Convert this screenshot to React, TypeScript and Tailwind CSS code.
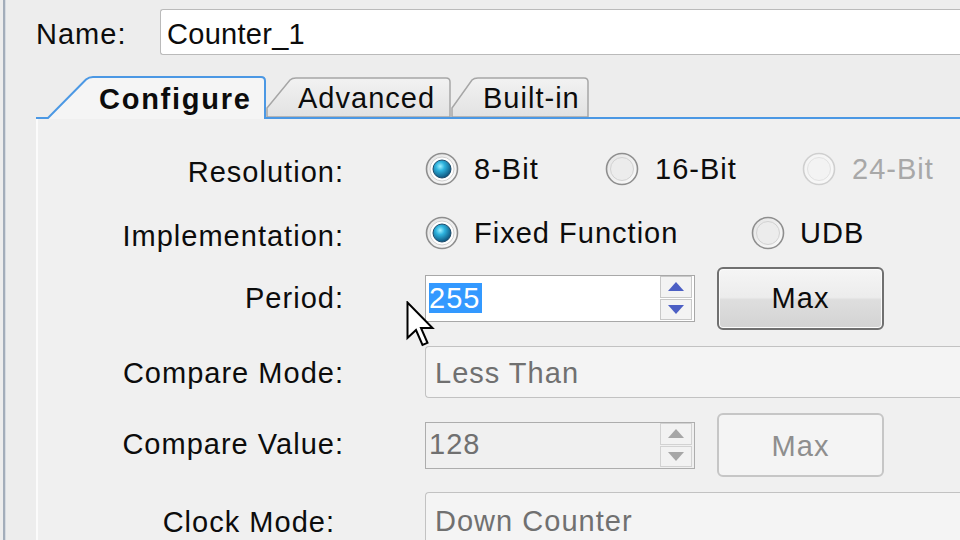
import React from "react";

type RadioState = "on" | "off" | "disabled";

function Radio({ state }: { state: RadioState }) {
  const ring = state === "disabled" ? "#cfcfcf" : "#8e8e8e";
  return (
    <svg width="34" height="34" viewBox="0 0 34 34" className="shrink-0">
      <defs>
        <linearGradient id={`rg-${state}`} x1="0" y1="0" x2="1" y2="1">
          <stop offset="0" stopColor={state === "disabled" ? "#f4f4f4" : "#e4e4e4"} />
          <stop offset="1" stopColor={state === "disabled" ? "#f8f8f8" : "#fbfbfb"} />
        </linearGradient>
        <radialGradient id="dot" cx="0.4" cy="0.35" r="0.7">
          <stop offset="0" stopColor="#9ff0ff" />
          <stop offset="0.35" stopColor="#2eb3de" />
          <stop offset="1" stopColor="#0b4a73" />
        </radialGradient>
      </defs>
      <circle cx="17" cy="17" r="15.5" fill={`url(#rg-${state})`} stroke={ring} strokeWidth="1.6" />
      {state === "on" ? (
        <>
          <circle cx="17" cy="17" r="12" fill="#ffffff" stroke="#d0d0d0" strokeWidth="1" />
          <circle cx="17" cy="17" r="9" fill="url(#dot)" stroke="#1d4c6b" strokeWidth="1" />
        </>
      ) : (
        <circle
          cx="17"
          cy="17"
          r="11.5"
          fill={state === "disabled" ? "#f3f3f3" : "#ececec"}
          stroke={state === "disabled" ? "#e2e2e2" : "#d2d2d2"}
          strokeWidth="1"
        />
      )}
    </svg>
  );
}

function Spinner({ disabled }: { disabled?: boolean }) {
  const fill = disabled ? "#a6a6a6" : "#4c5fc4";
  const box = disabled
    ? "flex-1 flex items-center justify-center border border-[#d2d2d2] bg-[#f2f2f2]"
    : "flex-1 flex items-center justify-center border border-[#c8c8c8] bg-[#f3f3f3]";
  return (
    <div className="w-[32px] h-[44px] flex flex-col gap-[1px] shrink-0">
      <div className={box}>
        <svg width="16" height="9" viewBox="0 0 16 9">
          <polygon points="8,0 16,9 0,9" fill={fill} />
        </svg>
      </div>
      <div className={box}>
        <svg width="16" height="9" viewBox="0 0 16 9">
          <polygon points="0,0 16,0 8,9" fill={fill} />
        </svg>
      </div>
    </div>
  );
}

export default function App() {
  return (
    <div className="relative flex w-[960px] h-[540px] overflow-hidden bg-[#ededed] font-['Liberation_Sans',Arial,sans-serif] text-[29px] tracking-[0.035em] text-[#0c0c0c]">
      <div className="w-[3px] shrink-0" />
      <div className="w-[3px] shrink-0 bg-[#a3adba] border-r border-[#d6dbe1]" />
      <div className="flex-1 flex flex-col pl-[30px]">
        {/* name */}
        <div className="flex items-center h-[46px] mt-[9px]">
          <span className="w-[124px] pt-[5px]">Name:</span>
          <div className="flex-1 h-full flex items-center pl-[6px] pt-[5px] bg-white border border-r-0 border-[#bababa] rounded-l-[3px] tracking-[0.01em]">
            Counter_1
          </div>
        </div>

        {/* tabs */}
        <div className="flex items-end h-[43px] mt-[21px]">
          <div className="relative w-[230px] h-[43px] shrink-0">
            <svg className="absolute inset-0" width="230" height="43" viewBox="0 0 230 43">
              <path d="M0 42 L12 42 L50 3.5 Q53 1 57 1 L225 1 Q229 1 229 5 L229 43 L0 43 Z" fill="#f5f5f5" />
              <path d="M0 42 L12 42 L50 3.5 Q53 1 57 1 L225 1 Q229 1 229 5 L229 43" fill="none" stroke="#4b98e4" strokeWidth="2" />
            </svg>
            <div className="relative h-full flex items-center pl-[63px] pt-[4px] font-bold tracking-[0.06em]">Configure</div>
          </div>
          <div className="relative w-[185px] h-[42px] shrink-0">
            <svg className="absolute inset-0" width="185" height="42" viewBox="0 0 185 42">
              <defs>
                <linearGradient id="tabg" x1="0" y1="0" x2="0" y2="1">
                  <stop offset="0" stopColor="#f2f2f2" />
                  <stop offset="1" stopColor="#e2e2e2" />
                </linearGradient>
              </defs>
              <path d="M1 40 L1 31 L24 3 Q26 1 30 1 L180 1 Q184 1 184 5 L184 40 Z" fill="url(#tabg)" stroke="#a6a6a6" strokeWidth="1.5" />
              <line x1="0" y1="41" x2="185" y2="41" stroke="#4b98e4" strokeWidth="2" />
            </svg>
            <div className="relative h-full flex items-center pl-[32px] pt-[2px]">Advanced</div>
          </div>
          <div className="relative w-[138px] h-[42px] shrink-0">
            <svg className="absolute inset-0" width="138" height="42" viewBox="0 0 138 42">
              <path d="M1 40 L1 31 L21 3 Q23 1 27 1 L133 1 Q137 1 137 5 L137 40 Z" fill="url(#tabg)" stroke="#a6a6a6" strokeWidth="1.5" />
              <line x1="0" y1="41" x2="138" y2="41" stroke="#4b98e4" strokeWidth="2" />
            </svg>
            <div className="relative h-full flex items-center pl-[32px] pt-[2px]">Built-in</div>
          </div>
          <div className="flex-1 h-full border-b-2 border-[#4b98e4]" />
        </div>

        {/* panel */}
        <div className="flex-1 flex flex-col pt-[18px] bg-[#f0f0f0] border-l-2 border-[#fbfbfb]">
          <div className="flex items-center h-[64px]">
            <div className="w-[306px] text-right pt-[8px]">Resolution:</div>
            <div className="flex items-center ml-[81px]">
              <div className="flex items-center gap-[15px] w-[180px]">
                <Radio state="on" />
                <span className="pt-[2px]">8-Bit</span>
              </div>
              <div className="flex items-center gap-[16px] w-[197px]">
                <Radio state="off" />
                <span className="pt-[2px]">16-Bit</span>
              </div>
              <div className="flex items-center gap-[16px] text-[#a8a8a8]">
                <Radio state="disabled" />
                <span className="pt-[2px]">24-Bit</span>
              </div>
            </div>
          </div>

          <div className="flex items-center h-[64px]">
            <div className="w-[306px] text-right pt-[8px]">Implementation:</div>
            <div className="flex items-center ml-[81px]">
              <div className="flex items-center gap-[15px] w-[326px]">
                <Radio state="on" />
                <span className="pt-[2px]">Fixed Function</span>
              </div>
              <div className="flex items-center gap-[15px]">
                <Radio state="off" />
                <span className="pt-[2px]">UDB</span>
              </div>
            </div>
          </div>

          <div className="flex items-center h-[66px]">
            <div className="w-[306px] text-right pt-[2px]">Period:</div>
            <div className="flex items-center ml-[81px]">
              <div className="w-[270px] h-[47px] flex items-center pl-[3px] pr-[2px] bg-white border border-[#a8a8a8]">
                <span className="bg-[#3399ff] text-white leading-[30px] pr-[2px]">255</span>
                <div className="flex-1" />
                <Spinner />
              </div>
              <button className="ml-[22px] w-[167px] h-[63px] rounded-[6px] border-2 border-[#707070] bg-[linear-gradient(to_bottom,#f5f5f5_0%,#ececec_48%,#dedede_52%,#d3d3d3_100%)] shadow-[inset_0_0_0_1px_#fbfbfb] tracking-[0.035em] text-[29px] pt-[2px]">
                Max
              </button>
            </div>
          </div>

          <div className="flex items-center h-[82px]">
            <div className="w-[306px] text-right pt-[3px]">Compare Mode:</div>
            <div className="flex-1 h-[52px] ml-[81px] flex items-center pl-[9px] pt-[3px] bg-[#f4f4f4] border border-r-0 border-[#c2c2c2] rounded-l-[4px] text-[#707070]">
              Less Than
            </div>
          </div>

          <div className="flex items-center h-[64px]">
            <div className="w-[306px] text-right">Compare Value:</div>
            <div className="flex items-center ml-[81px]">
              <div className="w-[270px] h-[47px] flex items-center pl-[3px] pr-[2px] bg-[#f0f0f0] border border-[#adadad] text-[#707070]">
                <span>128</span>
                <div className="flex-1" />
                <Spinner disabled />
              </div>
              <button className="ml-[22px] w-[167px] h-[64px] rounded-[6px] border-2 border-[#c6c6c6] bg-[#f4f4f4] text-[#8e8e8e] tracking-[0.035em] text-[29px] pt-[4px]">
                Max
              </button>
            </div>
          </div>

          <div className="flex items-start h-[84px] pt-[15px]">
            <div className="w-[306px] text-right pr-[9px] pt-[9px]">Clock Mode:</div>
            <div className="flex-1 h-[60px] ml-[81px] flex items-start pt-[7px] pl-[9px] bg-[#f4f4f4] border border-r-0 border-[#c2c2c2] rounded-tl-[4px] text-[#707070]">
              Down Counter
            </div>
          </div>
        </div>
      </div>

      {/* mouse cursor */}
      <svg className="absolute left-[406px] top-[301px]" width="30" height="46" viewBox="0 0 30 46">
        <path
          d="M1.5 1.5 L1.5 37 L10 29 L16.5 44 L21.5 41.8 L15 27 L26.5 27 Z"
          fill="#ffffff"
          stroke="#000000"
          strokeWidth="2"
          strokeLinejoin="miter"
        />
      </svg>
    </div>
  );
}
